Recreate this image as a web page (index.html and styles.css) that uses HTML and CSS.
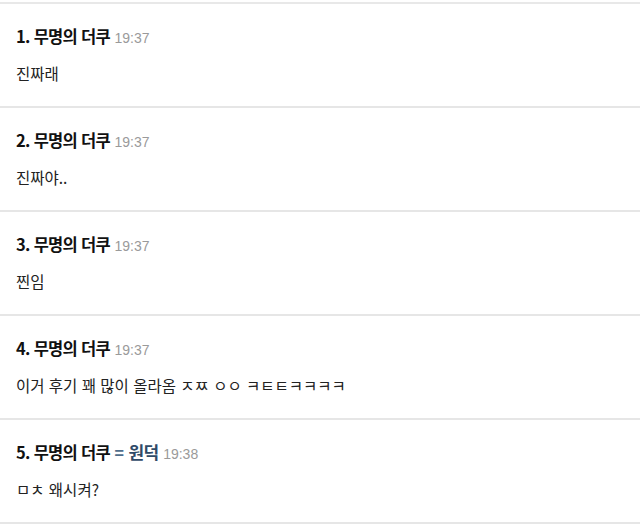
FILE: index.html
```html
<!DOCTYPE html>
<html lang="ko">
<head>
  <meta charset="UTF-8" />
  <title>댓글</title>
  <meta name="viewport" content="width=device-width, initial-scale=1" />
  <link rel="stylesheet" href="styles.css">
</head>
<body>
  <div class="comments">
    <div class="comment">
      <div class="head"><span class="name">1. 무명의 더쿠</span> <span class="time">19:37</span></div>
      <div class="text">진짜래</div>
    </div>
    <div class="comment">
      <div class="head"><span class="name">2. 무명의 더쿠</span> <span class="time">19:37</span></div>
      <div class="text">진짜야..</div>
    </div>
    <div class="comment">
      <div class="head"><span class="name">3. 무명의 더쿠</span> <span class="time">19:37</span></div>
      <div class="text">찐임</div>
    </div>
    <div class="comment">
      <div class="head"><span class="name">4. 무명의 더쿠</span> <span class="time">19:37</span></div>
      <div class="text">이거 후기 꽤 많이 올라옴 ㅈㅉ ㅇㅇ ㅋㅌㅌㅋㅋㅋㅋ</div>
    </div>
    <div class="comment">
      <div class="head"><span class="name">5. 무명의 더쿠</span> <span class="eq">=</span> <span class="writer">원덕</span> <span class="time">19:38</span></div>
      <div class="text">ㅁㅊ 왜시켜?</div>
    </div>
  </div>
</body>
</html>
```

FILE: styles.css
```css
body {
  margin: 0;
  background: #fff;
  font-family: "Noto Sans CJK KR", "Noto Sans", sans-serif;
  color: #1a1a1a;
}
.comments {
  margin-top: 2px;
  border-top: 2px solid #e8e8e8;
}
.comment {
  height: 104px;
  box-sizing: border-box;
  padding: 21px 16px 0;
  border-bottom: 2px solid #e6e6e6;
}
.head {
  height: 22px;
  line-height: 22px;
  white-space: nowrap;
}
.name {
  font-size: 16.5px;
  font-weight: 700;
  letter-spacing: -0.7px;
  color: #111;
}
.eq {
  font-size: 16px;
  font-weight: 700;
  color: #4f6d8c;
}
.writer {
  font-size: 17px;
  font-weight: 700;
  color: #2f4a68;
  letter-spacing: -0.5px;
}
.time {
  font-family: "Liberation Sans", "Noto Sans", sans-serif;
  font-size: 14px;
  color: #9a9a9a;
}
.text {
  margin-top: 15px;
  height: 22px;
  line-height: 22px;
  font-size: 15.5px;
  color: #222;
}
```
